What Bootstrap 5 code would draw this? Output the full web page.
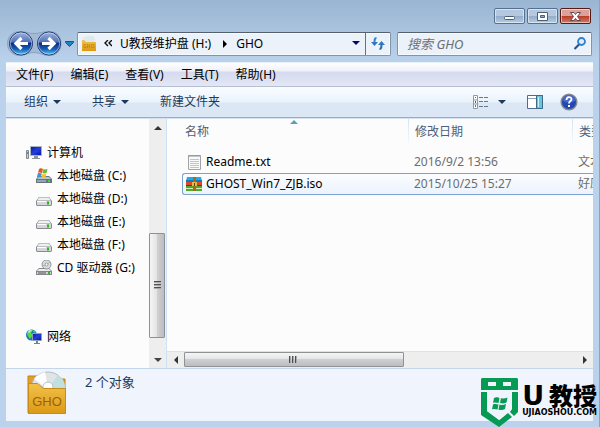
<!DOCTYPE html>
<html lang="zh-CN">
<head>
<meta charset="utf-8">
<meta name="viewport" content="width=device-width, initial-scale=1">
<title>GHO</title>
<link href="https://cdn.jsdelivr.net/npm/bootstrap@5.3.0/dist/css/bootstrap.min.css" rel="stylesheet">
<style>
body{font:12px/16px "Noto Sans","Noto Sans CJK SC",sans-serif;color:#000;background:#bad2eb}
button{font:inherit;color:inherit;border:0;background:none;padding:0}
a{color:inherit;text-decoration:none}
a:hover{color:inherit}
svg{display:block;flex:none}
.explorer{padding:0 6px 6px;background:linear-gradient(#9ab5d2,#b9d1ea 60px,#bad2eb 100px);border-right:1px solid #3bc4ee}
.captions{padding:8px 2px 6px 0;gap:2px}
.captions button{width:31px;height:16px;border:1px solid #56708f;border-radius:2px;box-shadow:inset 0 0 0 1px #ffffff80;background:linear-gradient(#b4c9e0 48%,#91abc8 50%,#b5cde6)}
.captions .shut{border-color:#541a1c;background:linear-gradient(#dda297 48%,#b93b27 50%,#d17c62)}
.locbar{padding:0 1px 5px 0}
.arrows{width:71px}
.field{height:24px;background:#ebf2fa;border:1px solid #8295a8;border-top-color:#55606d;box-shadow:inset 0 0 0 1px #fff8;border-radius:2px}
.refresh{width:25px;border-left:1px solid #66727f;height:22px}
.search{width:195px;margin-left:6px}
.search input{border:0;background:none;outline:0;font-style:italic;font-size:13px;padding:0 0 0 9px;min-width:0}
.search input::placeholder{color:#6c6f74;opacity:1}
.menus{height:24px;padding:0 10px;gap:17px;background:linear-gradient(#fff,#eff1f9 8px,#d5daee 9px,#e3e7f5);border-top:1px solid #e8f0fa}
.tools{height:32px;padding:0 15px 0 18px;color:#1e395b;background:linear-gradient(#fbfdff,#e9f3fc 15px,#dce7f5 16px,#dce7f5);border-top:1px solid #b4bfd2;border-bottom:1px solid #97aecb}
.tools .acts{gap:31px}
.work{height:250px;background:#fcfcfc;border-top:1px solid #d5e1f0}
.side{flex:0 0 143px;padding:22px 0 0 20px;white-space:nowrap}
.side a{height:23px;gap:5px}
.side .drive{padding-left:10px}
.side .net{margin-top:46px}
.sbar{background:#eee}
.sbar.vert{flex:0 0 17px}
.sbar.horz{height:17px;border-top:1px solid #e2e2e2}
.sbar button{flex:0 0 17px}
.sbar.vert .grip{margin-right:1px;border:1px solid #8f9195;border-radius:1px;background:linear-gradient(90deg,#f5f5f5,#e4e4e5 48%,#cfd0d2 52%,#bcbdc0)}
.sbar.horz .grip{margin:0 0 1px;border:1px solid #8f9195;border-radius:1px;background:linear-gradient(#f5f5f5,#e5e5e6 45%,#cecfd1 50%,#bcbdc0)}
.listing{border-left:1px solid #cfe1f5;min-width:0}
.files{table-layout:fixed;width:calc(100% - 15px);margin-left:15px;border-collapse:separate;border-spacing:0}
.files th,.files td{padding:0 0 0 3px;white-space:nowrap;overflow:hidden}
.files th{height:24px;font-weight:400;color:#4c607a;padding-top:2px}
.files th+th{border-left:1px solid;border-image:linear-gradient(#d3e3f6,#f4f8fd) 1}
.files th+th,.files td+td{padding-left:6px}
.files td{height:22px;color:#6d6d6d;border:1px solid transparent;border-width:1px 0}
.files td:first-child{color:#000;padding-left:4px}
.files .chosen td{border-color:#7da2ce;background:linear-gradient(#fcfdff,#ebf3fd)}
.files .chosen td:first-child{border-left:1px solid #7da2ce;border-radius:3px 0 0 3px;padding-left:3px}
.files .space td{height:8px;padding:0}
.sorted{top:1px;left:111px}
.details{height:53px;padding:2px 0 0 15px;gap:18px;background:#f0f4fc;border-top:1px solid #c3d5ea;color:#1e395b}
.details span{padding-top:2px;font-size:13px;line-height:18px}
.brandmark{right:2px;bottom:0;gap:3px;color:#000;font-family:"Noto Sans CJK SC",sans-serif;font-weight:900}
.brandmark .words{padding-bottom:10px}
.brandmark b{font-size:24px;line-height:24px;font-weight:900;white-space:nowrap;gap:2px}
.brandmark b i{font:bold 27px/24px "DejaVu Sans",sans-serif}
.brandmark small{font:bold 8px/9px "DejaVu Sans",sans-serif}
</style>
<script src="https://cdn.jsdelivr.net/npm/bootstrap@5.3.0/dist/js/bootstrap.bundle.min.js"></script>
</head>
<body>
<svg width="0" height="0" class="position-absolute" aria-hidden="true">
<defs>
<linearGradient id="orb" x2="0" y2="1"><stop offset="0" stop-color="#a3b6dc"/><stop offset=".42" stop-color="#5575b8"/><stop offset=".5" stop-color="#0b2e88"/><stop offset=".75" stop-color="#1760b8"/><stop offset="1" stop-color="#5ad2fa"/></linearGradient>
<linearGradient id="gold" x2="0" y2="1"><stop offset="0" stop-color="#f2c14b"/><stop offset="1" stop-color="#dc9a14"/></linearGradient>
<linearGradient id="screen" x2="1" y2="1"><stop offset="0" stop-color="#0618a0"/><stop offset=".5" stop-color="#2540d8"/><stop offset="1" stop-color="#0410a0"/></linearGradient>
<symbol id="disk" viewBox="0 0 16 16"><path d="M3 6h10l3 4v4l-1 1H1l-1-1v-4z" fill="#8b8c90"/><path d="M3.300 6.500h9.400l2.300 3H1z" fill="#eef0f2"/><path d="M1 10h14v4H1z" fill="#d4d6d9"/><path d="M1 10h9v1H1z" fill="#fff"/><path d="M11 10.500h2v3h-2z" fill="#2fb51e"/></symbol>
</defs>
</svg>
<div class="explorer d-flex flex-column position-relative">
  <div class="captions d-flex justify-content-end">
    <button type="button" aria-label="最小化"><svg width="29" height="14"><rect x="9.500" y="7.500" width="10" height="3" rx="1" fill="#fff" stroke="#4c5e74"/></svg></button>
    <button type="button" aria-label="最大化"><svg width="29" height="14"><path fill-rule="evenodd" d="M9.500 3.500h10v8h-10zM12.500 6.500v2h4v-2z" fill="#fff" stroke="#4c5e74"/></svg></button>
    <button type="button" class="shut" aria-label="关闭"><svg width="29" height="14"><path d="M9.500 3.500h3.500l1.500 2 1.500-2h3.500l-3 4 3 4H16l-1.500-2-1.500 2H9.500l3-4z" fill="#fff" stroke="#5c4a55"/></svg></button>
  </div>
  <div class="locbar d-flex align-items-center">
    <div class="arrows d-flex align-items-center">
      <svg width="69" height="27" viewBox="0 0 69 27" role="img" aria-label="后退 前进"><path d="M14 1.500c6 0 8 2 14 2s9-2 15-2c8 0 12 5 12 12s-4 12-12 12c-6 0-9-3-15-3s-8 3-14 3C6 25.500 1.500 20 1.500 13.500S6 1.500 14 1.500z" fill="#a4b9d4" stroke="#8aa2c0"/>
      <g fill="url(#orb)" stroke="#17306c"><circle cx="15" cy="13.500" r="11.500"/><circle cx="43" cy="13.500" r="11.500"/></g>
      <g fill="none" stroke="#d5e6fa" stroke-opacity=".6"><circle cx="15" cy="13.500" r="10.700"/><circle cx="43" cy="13.500" r="10.700"/></g>
      <path d="M22 13.500H10m5.500-5.500L10 13.500l5.500 5.500M36 13.500h12M42.500 8l5.500 5.500-5.500 5.500" fill="none" stroke="#fff" stroke-width="3.200"/>
      <path d="M59.500 11.500h8v1l-4 4-4-4z" fill="#1d84c5" stroke="#214e7e"/></svg>
    </div>
    <nav class="field d-flex flex-grow-1 align-items-center ps-1" aria-label="地址">
      <svg width="14" height="16" viewBox="0 0 14 16"><path d="M1 4V2l4-2h6l2 3v4H1z" fill="#dfe8ea"/><path d="M0 4h2l2 2h10v9H0z" fill="url(#gold)"/><path d="M4 8.500H2v3h2V10M5.500 8v4m2-4v4m-2-2h2M9.500 8.500H12v3H9.500z" stroke="#c4840d" fill="none" stroke-width=".8"/></svg>
      <svg class="ms-2" width="8" height="8"><path d="M4 0L1 3l3 3M8 0L5 3l3 3" fill="none" stroke="#111" stroke-width="1.400"/></svg>
      <a href="#" class="ms-2">U教授维护盘 (H:)</a>
      <svg class="ms-2 ps-1" width="9" height="8"><path d="M0 0l4 4-4 4z"/></svg>
      <a href="#" class="ms-2 flex-grow-1">GHO</a>
      <button type="button" aria-label="历史" class="pe-1"><svg width="9" height="5"><path d="M0 0h8L4 4z" fill="#06066a"/></svg></button>
      <button type="button" class="refresh d-flex align-items-center justify-content-center" aria-label="刷新"><svg width="14" height="13"><path d="M5.500 1C3.500 1 3.500 3 3.500 6" fill="none" stroke="#3c83c8" stroke-width="2"/><path d="M0 5h7L3.500 9z" fill="#2f77bf"/><path d="M8.500 12c2 0 2-2 2-5" fill="none" stroke="#3569a8" stroke-width="2"/><path d="M7 8h7l-3.500-4z" fill="#2f77bf"/></svg></button>
    </nav>
    <div class="field search d-flex align-items-center pe-1">
      <input class="flex-grow-1" type="search" aria-label="搜索 GHO" placeholder="搜索 GHO">
      <svg width="14" height="13"><circle cx="8.500" cy="4.500" r="3.500" fill="#d9edfb" stroke="#2f80cb" stroke-width="1.800"/><path d="M6 7.500L1.500 12" stroke="#28509a" stroke-width="2.200"/></svg>
    </div>
  </div>
  <nav class="menus d-flex align-items-center" aria-label="菜单">
    <button type="button">文件(F)</button><button type="button">编辑(E)</button><button type="button">查看(V)</button><button type="button">工具(T)</button><button type="button">帮助(H)</button>
  </nav>
  <div class="tools d-flex align-items-center">
    <div class="acts d-flex align-items-center">
      <button type="button" class="d-flex align-items-center gap-1">组织 <svg width="9" height="4"><path d="M1 0h8L5 4z" fill="#1e395b"/></svg></button>
      <button type="button" class="d-flex align-items-center gap-1">共享 <svg width="9" height="4"><path d="M1 0h8L5 4z" fill="#1e395b"/></svg></button>
      <button type="button">新建文件夹</button>
    </div>
    <button type="button" class="d-flex align-items-center gap-2 ms-auto" aria-label="更改视图"><svg width="16" height="14"><path d="M.5.500h4v13h-4zM.5 5h4M.5 9h4" fill="#fff" stroke="#8d98a9"/><path d="M2 2h1v1H2z" fill="#3975b5"/><path d="M2 6h1v2H2z" fill="#c33"/><path d="M2 10h1v2H2z" fill="#36924b"/><path d="M6 2.500h4m1 0h4M6 6.500h4m1 0h4M6 11.500h4m1 0h4" stroke="#65778f"/></svg><svg width="10" height="4"><path d="M1 0h8L5 4z" fill="#1e395b"/></svg></button>
    <button type="button" class="ms-3 ps-1" aria-label="预览窗格"><svg width="17" height="14"><path d="M.5.500h15v13H.5z" fill="#fff" stroke="#516b8b"/><path d="M1 3.500h9" stroke="#8a9fb8"/><path d="M9.500.500h6v13h-6z" fill="#67c5dc" stroke="#3f6988"/><path d="M11 2h1v10h-1z" fill="#c6f4fa"/></svg></button>
    <button type="button" class="ms-3" aria-label="帮助"><svg width="18" height="18"><circle cx="9" cy="9" r="7.800" fill="#2348b3" stroke="#858891" stroke-width="1.500"/><path d="M3 8a6 6 0 0 1 12 0c-4 2-8 2-12 0" fill="#6280ce" opacity=".6"/><path d="M6.500 7c0-4 5-3.500 5-.8C11.500 8 9 8 9 10.500" fill="none" stroke="#fff" stroke-width="1.800"/><path d="M8 12h2v2H8z" fill="#fff"/></svg></button>
  </div>
  <main class="work d-flex">
    <nav class="side" aria-label="文件夹">
      <a href="#" class="d-flex align-items-center"><svg width="16" height="16"><path d="M.5 5.500h2v8h-2z" fill="#ccd1d5" stroke="#80878d"/><path d="M1 7h1v2H1z" fill="#38b92c"/><path d="M4.500 1.500h11v9h-11z" fill="url(#screen)" stroke="#a9b4c3"/><path d="M8 11h4v2h2v1H6v-1h2z" fill="#8b939c"/></svg>计算机</a>
      <a href="#" class="drive d-flex align-items-center"><svg width="16" height="16"><path d="M3 8h10l3 3v4H0v-4z" fill="#68737d"/><path d="M3 9h10l2 2H1z" fill="#b8c4cc"/><path d="M1 12h9v2H1z" fill="#8daab2"/><path d="M12 12h2v2h-2z" fill="#40dd31"/><path d="M3 1c2-1.500 3 0 4 0L6 5C5 5 4 4 2 5z" fill="#e3562a"/><path d="M7.500 1c2 1 3 0 4 0l-1 4c-1.500.5-2.500.5-4 0z" fill="#6cb536"/><path d="M1.800 5.500c2-1 3 0 4 0l-1 4c-1-.5-2-1-4 0z" fill="#3d93d7"/><path d="M6.300 5.700c1.500.8 3 .5 4 0l-1 4c-1.500.5-2.500.5-4 0z" fill="#f5c324"/></svg>本地磁盘 (C:)</a>
      <a href="#" class="drive d-flex align-items-center"><svg width="16" height="16"><use href="#disk"/></svg>本地磁盘 (D:)</a>
      <a href="#" class="drive d-flex align-items-center"><svg width="16" height="16"><use href="#disk"/></svg>本地磁盘 (E:)</a>
      <a href="#" class="drive d-flex align-items-center"><svg width="16" height="16"><use href="#disk"/></svg>本地磁盘 (F:)</a>
      <a href="#" class="drive d-flex align-items-center"><svg width="16" height="16"><path d="M3 8h10l3 3v4H0v-4z" fill="#85878b"/><path d="M3 9h10l2 2H1z" fill="#eceeef"/><path d="M1 12h14v2H1z" fill="#d2d4d6"/><path d="M2 13h8" stroke="#555"/><path d="M12 11h2v3h-2z" fill="#30b720"/><circle cx="10.500" cy="4.500" r="4.500" fill="#d9dddd" stroke="#8e9495"/><circle cx="10.500" cy="4.500" r="1.500" fill="#fff" stroke="#929899"/><path d="M7 6l2.500-1M11.500 4L14 2" stroke="#8fc49b"/></svg>CD 驱动器 (G:)</a>
      <a href="#" class="net d-flex align-items-center"><svg width="16" height="16"><circle cx="5.500" cy="6" r="5.500" fill="#1479c0"/><path d="M1 4c1-3 4-4 6-3L5 4l2 2-3 4C3 8 1 7 1 4zM8 1l2 3-3-1z" fill="#5fd449"/><path d="M2 3c1-2 3-2 4-2L3 4z" fill="#c7f4ff"/><path d="M6.500 4.500h9v7h-9z" fill="url(#screen)" stroke="#8ca0b9"/><path d="M10 12h2v2h2v1H8v-1h2z" fill="#79838d"/></svg>网络</a>
    </nav>
    <div class="sbar vert d-flex flex-column">
      <button type="button" class="d-flex justify-content-center align-items-center" aria-label="向上"><svg width="8" height="4"><path d="M0 4h8L4 0z" fill="#333"/></svg></button>
      <div class="d-flex flex-column flex-grow-1"><div style="height:45%"></div><div class="grip d-flex align-items-center justify-content-center" style="height:49%"><svg width="7" height="9"><path d="M0 .5h7M0 3.500h7M0 6.500h7" stroke="#4c4f54"/><path d="M0 1.500h7M0 4.500h7M0 7.500h7" stroke="#aaa"/></svg></div></div>
      <button type="button" class="d-flex justify-content-center align-items-center" aria-label="向下"><svg width="8" height="4"><path d="M0 0h8L4 4z" fill="#444"/></svg></button>
    </div>
    <section class="listing d-flex flex-column flex-grow-1">
      <div class="flex-grow-1 overflow-hidden position-relative">
        <svg class="sorted position-absolute translate-middle-x ms-3" width="8" height="4"><path d="M0 4h8L4 0z" fill="#5e9dbd"/></svg>
        <table class="files">
          <colgroup><col style="width:226px"><col style="width:164px"><col></colgroup>
          <thead><tr><th scope="col">名称</th><th scope="col">修改日期</th><th scope="col">类型</th></tr></thead>
          <tbody>
          <tr class="space"><td colspan="3"></td></tr>
          <tr><td><div class="d-flex align-items-center gap-1"><svg width="16" height="16"><path d="M2.500 1.500h12v14h-12z" fill="#f8f9f9" stroke="#a1a4a5"/><path d="M3 1v2m2-2v2m2-2v2m2-2v2m2-2v2m2-2v2" stroke="#8f9496"/><path d="M4 5.500h9M4 7.500h9M4 9.500h9M4 11.500h9M4 13.500h9" stroke="#b5c7d2"/></svg><a href="#">Readme.txt</a></div></td><td>2016/9/2 13:56</td><td>文本文档</td></tr>
          <tr class="chosen"><td><div class="d-flex align-items-center gap-1"><svg width="16" height="16"><path d="M1 1h14l1 4H0z" fill="#27a7e4"/><path d="M0 4h16v2H0z" fill="#127bb5"/><path d="M0 6h16v4H0z" fill="#d84a2e"/><path d="M0 9h16v1H0z" fill="#86251c"/><path d="M0 10h16v5H0z" fill="#56a72e"/><path d="M0 12h16v1H0z" fill="#d4eca9"/><path d="M7 1h3v14H7z" fill="#a66920"/><path d="M6 6h5v4H6z" fill="#e7b54a"/><path d="M8 7h1v3H8z" fill="#684115"/></svg><a href="#">GHOST_Win7_ZJB.iso</a></div></td><td>2015/10/25 15:27</td><td>好压 ISO</td></tr>
          </tbody>
        </table>
      </div>
      <div class="sbar horz d-flex">
        <button type="button" class="d-flex justify-content-center align-items-center" aria-label="向左"><svg width="4" height="8"><path d="M4 0v8L0 4z" fill="#333"/></svg></button>
        <div class="d-flex flex-grow-1"><div class="grip d-flex align-items-center justify-content-center" style="width:56%"><svg width="9" height="7"><path d="M.5 0v7M3.500 0v7M6.500 0v7" stroke="#4c4f54"/><path d="M1.500 0v7M4.500 0v7M7.500 0v7" stroke="#aaa"/></svg></div></div>
        <button type="button" class="d-flex justify-content-center align-items-center" aria-label="向右"><svg width="4" height="8"><path d="M0 0v8l4-4z" fill="#333"/></svg></button>
      </div>
    </section>
  </main>
  <footer class="details d-flex">
    <svg width="46" height="46" viewBox="0 0 46 46" role="img" aria-label="GHO"><path d="M7 5h12l3 3h22v34H7z" fill="#e2a02a" stroke="#c18319"/><circle cx="27" cy="18" r="17" fill="#dfe5e7" stroke="#b4bbbd"/><path d="M27 18l10-14c5 3 7 8 7 14z" fill="#bfe0dd"/><path d="M27 18L13 8c3-4 7-6 11-7z" fill="#fff"/><circle cx="27" cy="16" r="5" fill="#fff" stroke="#b9c0c2"/><path d="M7.500 12.500h9l6 5h22v25h-37z" fill="url(#gold)" stroke="#c98b18"/><text x="26" y="35" text-anchor="middle" font-family="Liberation Sans, sans-serif" font-size="13" fill="#99620a">GHO</text></svg>
    <span>2 个对象</span>
  </footer>
  <div class="brandmark d-flex align-items-end position-absolute">
    <svg width="38" height="49" viewBox="0 0 38 49"><path d="M1 0h35l1 1v11H0V1z" fill="#079a55"/><path d="M7 4h8v4H7zM22 4h8v4h-8z" fill="#f0f4fc"/><path d="M0 14h6v19l12 9 9-7 4 4-13 10L0 37z" fill="#079a55"/><path d="M37 14h-6v17l-2 3 4 4 4-4z" fill="#079a55"/><path d="M6 14h25v17L18.500 42 6 33z" fill="#f0f4fc"/><path d="M13 20c3-1.500 4 0 5.500 0l-1 5c-2 0-3-1-5.500 0zM20 20c2 1 4 .5 6.500-.5l-1 5c-2 1-4 1.300-6.500.5zM12 26.500c2-1 4 0 5.500 0l-1 5c-2 0-3-1-5.500 0zM18.500 26.500c2 1 4 .7 6.500-.5l-1 5c-2 1-4 1.500-6.500.5z" fill="#079a55"/></svg>
    <div class="words d-flex flex-column"><b class="d-flex justify-content-between align-items-baseline"><i>U</i>教授</b><small>UJIAOSHOU.COM</small></div>
  </div>
</div>
</body>
</html>
